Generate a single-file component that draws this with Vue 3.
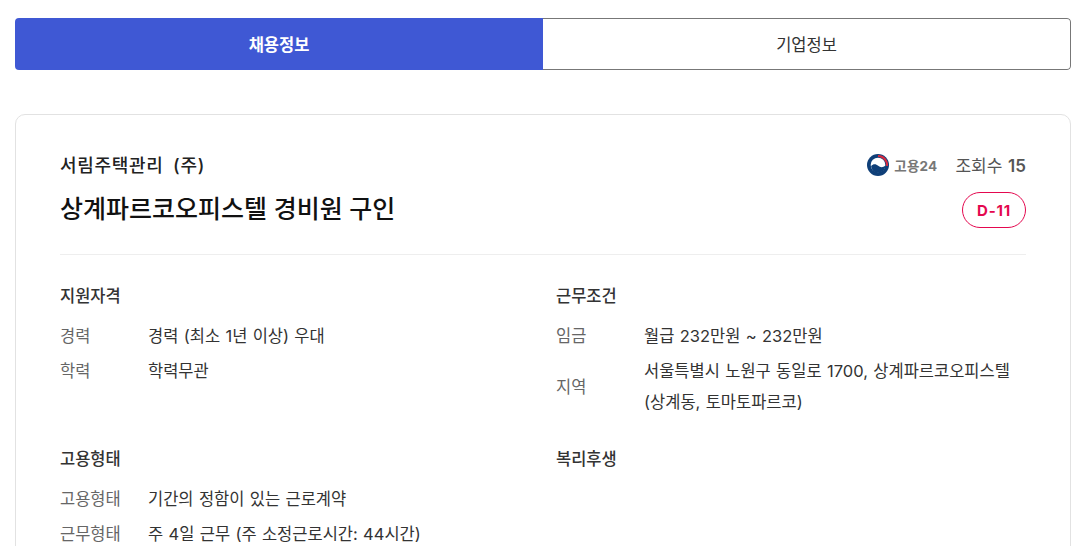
<script setup>
const sections = [
  { title: '지원자격', rows: [['경력', '경력 (최소 1년 이상) 우대'], ['학력', '학력무관']] },
  { title: '근무조건', rows: [['임금', '월급 232만원 ~ 232만원'], ['지역', '서울특별시 노원구 동일로 1700, 상계파르코오피스텔 (상계동, 토마토파르코)']] },
  { title: '고용형태', rows: [['고용형태', '기간의 정함이 있는 근로계약'], ['근무형태', '주 4일 근무 (주 소정근로시간: 44시간)']] },
  { title: '복리후생', rows: [] },
]
</script>

<template>
  <div class="page">
    <div class="tabs">
      <button class="tab active">채용정보</button>
      <button class="tab">기업정보</button>
    </div>
    <section class="card">
      <header class="head">
        <div class="head-left">
          <div class="company">서림주택관리 <span class="co">(주)</span></div>
          <h1 class="title">상계파르코오피스텔 경비원 구인</h1>
        </div>
        <div class="head-right">
          <div class="meta">
            <span class="source">
              <svg class="mark" viewBox="0 0 24 24" width="22" height="22">
                <circle cx="12" cy="12" r="12" fill="#0f3f78" />
                <circle cx="12" cy="12" r="8" fill="#fff" />
                <path d="M12 2.200A9.800 9.800 0 0 1 21.800 13" fill="none" stroke="#d9293f" stroke-width="2.200" />
                <path d="M4.500 13C7 10.300 10 10.800 12.200 12.800C14.400 14.800 17.300 15 20 12.800C19.800 17.500 16 20.500 12 20.500C8 20.500 4.800 17.500 4.500 13Z" fill="#0f3f78" />
              </svg>
              <span class="source-text">고용24</span>
            </span>
            <span class="views">조회수 <b>15</b></span>
          </div>
          <span class="dday">D-11</span>
        </div>
      </header>

      <div class="grid">
        <div v-for="s in sections" :key="s.title" class="section">
          <h2 class="section-title">{{ s.title }}</h2>
          <dl class="rows">
            <div v-for="r in s.rows" :key="r[0]" class="row">
              <dt>{{ r[0] }}</dt>
              <dd>{{ r[1] }}</dd>
            </div>
          </dl>
        </div>
      </div>
    </section>
  </div>
</template>

<style>
html, body { margin: 0; height: 546px; overflow: hidden; background: #fff; }
</style>

<style scoped>
.page {
  box-sizing: border-box;
  width: 1086px;
  height: 546px;
  overflow: hidden;
  padding: 18px 15px 0;
  font-family: Inter, "Noto Sans CJK KR", sans-serif;
  color: #222;
}
.tabs {
  display: grid;
  grid-template-columns: 528px 1fr;
  height: 52px;
  border-radius: 4px;
  overflow: hidden;
}
.tab {
  font: inherit;
  font-size: 16.5px;
  background: #fff;
  color: #333;
  border: 1px solid #777;
  border-left: 0;
  border-radius: 0 4px 4px 0;
  padding: 0;
}
.tab.active {
  background: #3f58d4;
  border: 0;
  border-radius: 0;
  color: #fff;
  font-weight: 700;
}
.card {
  margin-top: 44px;
  border: 1px solid #e2e2e2;
  border-radius: 10px;
  padding: 36px 44px 40px;
}
.head {
  display: flex;
  justify-content: space-between;
  padding-bottom: 26px;
  border-bottom: 1px solid #eee;
}
.company {
  font-size: 18px;
  font-weight: 500;
  line-height: 30px;
  letter-spacing: 0.7px;
  color: #222;
}
.co { margin-left: 4px; }
.title {
  margin: 11px 0 0;
  font-size: 25px;
  font-weight: 500;
  line-height: 34px;
  color: #111;
}
.head-right {
  display: flex;
  flex-direction: column;
  align-items: flex-end;
}
.meta {
  display: flex;
  align-items: center;
  height: 27px;
  margin-bottom: 2px;
  gap: 18px;
}
.source { display: flex; align-items: center; gap: 5px; }
.mark { display: block; }
.source-text {
  font-size: 13.5px;
  font-weight: 700;
  color: #777;
  letter-spacing: 0.2px;
}
.views {
  font-size: 17px;
  color: #555;
}
.views b { font-weight: 600; margin-left: 1px; }
.dday {
  box-sizing: border-box;
  margin-top: 12px;
  width: 64px;
  height: 36px;
  border: 1px solid #e4084f;
  border-radius: 18px;
  display: flex;
  align-items: center;
  justify-content: center;
  color: #e4084f;
  font-size: 15px;
  font-weight: 700;
  letter-spacing: 0.8px;
}
.grid {
  display: grid;
  grid-template-columns: 470px 470px;
  column-gap: 26px;
  padding-top: 26px;
  row-gap: 22px;
}
.section-title {
  margin: 0 0 10px;
  font-size: 16.5px;
  font-weight: 500;
  line-height: 30px;
  color: #333;
}
.rows { margin: 0; min-height: 70px; }
.row {
  display: flex;
  align-items: center;
  margin-bottom: 4px;
  font-size: 16.5px;
  line-height: 31px;
  word-spacing: 0.7px;
}
.row dt { flex: 0 0 88px; color: #666; }
.row dd { margin: 0; color: #333; flex: 1; word-break: keep-all; }
</style>
